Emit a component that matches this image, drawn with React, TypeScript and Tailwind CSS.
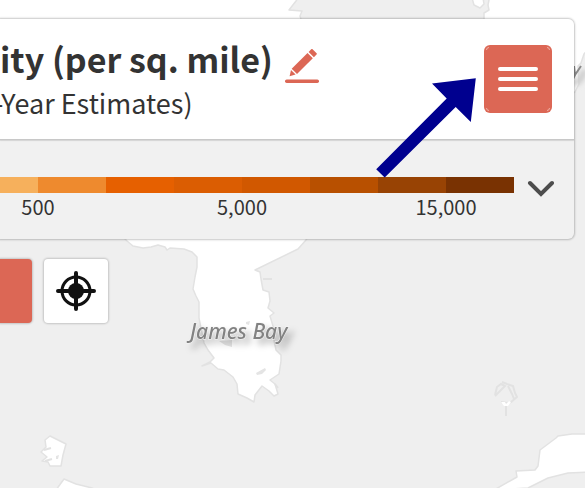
const swatches = [
	'bg-[#f6b05c]',
	'bg-[#ee8a2e]',
	'bg-[#e66000]',
	'bg-[#db5d02]',
	'bg-[#d15800]',
	'bg-[#b85000]',
	'bg-[#984304]',
	'bg-[#793202]',
];

const labels = ['500', '5,000', '15,000'];

const MapBackground = () => (
	<svg
		className="absolute inset-0 w-full h-full"
		viewBox="0 0 585 488"
		preserveAspectRatio="xMinYMin slice"
		aria-hidden="true"
	>
		<defs>
			<filter id="haze" x="-50%" y="-50%" width="200%" height="200%">
				<feGaussianBlur stdDeviation="2.5" />
			</filter>
		</defs>
		<g fill="#fff" stroke="#e2e2e2" strokeWidth="1.5" strokeLinejoin="round">
			{/* Hudson Bay */}
			<path d="M-5 -5H300L296 1L289 10L302 11L300 16L303 25H484V13L489 10L488 5L490 -5H590V47L584 54L581 63L578 66L579 84L575 92L560 100H-5Z" />
			<path d="M472 -2L474 5L480 8L484 4L483 -2Z" />
			{/* James Bay */}
			<path d="M120 234L127 241L133 246L143 248L151 247L158 245L165 247L167 250L170 248L184 249L192 252L197 257L197 267L195 277L193 289L196 296L199 302L199 318L201 328L204 343L208 350L214 358L210 362L202 366L211 363L218 369L224 370L233 377L237 384L238 394L247 398L254 402L255 395L262 386L269 391L274 396L278 394L275 384L270 380L279 374L281 361L281 355L276 350L274 340L273 326L270 316L274 313L268 308L270 301L269 292L263 290L261 279L260 272L255 270L298 249L306 240L310 234Z" />
			{/* Southern coast */}
			<path d="M494 490L517 477L516 471L535 470L538 466L540 450L556 438L558 436L572 434L590 434V472L568 473L548 478L528 488Z" />
			{/* Lakes */}
			<path d="M50 436L66 444L63 455L61 466L50 466L48 462L42 461L47 457L41 452L46 447L45 440Z" />
			<path d="M56 490L64 479L76 484L92 488L100 492Z" />
		</g>
		<g fill="none" stroke="#e2e2e2" strokeWidth="2">
			<path d="M495 395L497 387L501 384L505 386L500 391L495 396M502 382L507 384L513 386L515 393L517 397L511 402L507 403L501 402M508 386L512 394L514 399" />
			<path d="M506 406V416M263 279H272M275 384L278 388M44 450L51 448M45 461L52 459" />
		</g>
		<path d="M501 402H505L506 404L509 401L511 402L508 406H504Z" fill="#fff" />
		<g fill="#e4e4e4">
			<path d="M256 373L265 368L266 370L262 374L257 375Z" />
			<path d="M246 322L250 321L249 325L246 324ZM219 341L232 340V347L225 345Z" />
			<path d="M56 456L59 455L58 459L56 459Z" />
		</g>
		<text
			x="190"
			y="339"
			className="font-['Noto_Sans',sans-serif] text-[21px] font-medium italic drop-shadow-[5px_5px_3px_rgba(0,0,0,0.25)]"
			fill="#828282"
			stroke="#f5f5f5"
			strokeWidth="1"
			paintOrder="stroke"
		>
			James Bay
		</text>
		<path d="M574 84L580 80L585 70" stroke="#ccc" strokeWidth="6" fill="none" filter="url(#haze)" />
		<path d="M574 66L575 75L581 66M576 73L573 79" stroke="#8a8a8a" strokeWidth="2" fill="none" />
	</svg>
);

const PencilIcon = () => (
	<svg className="w-[34px] h-[34px]" viewBox="0 0 34 34" fill="#dc6755">
		<path d="M27.3 0L31.6 4.3Q32.2 5 31.5 5.6L28.9 8.2L23.6 2.9L26.2 .3Q26.8 -.2 27.3 0Z" />
		<path d="M22.5 4L27.8 9.3L12 25L6.7 19.8Z" />
		<path d="M6 21L10.6 25.6L4.6 27.2Z" />
		<rect x="0" y="30.4" width="34" height="3.5" rx="1.7" />
	</svg>
);

const MenuIcon = () => (
	<svg className="w-[68px] h-[68px]" viewBox="0 0 68 68" fill="none">
		<path d="M16 24H52M16 34H52M16 44H52" stroke="#fff" strokeWidth="4" strokeLinecap="round" />
		<path
			d="M2.5 5Q2.5 2.5 5 2.5M63 2.5Q65.5 2.5 65.5 5M65.5 63Q65.5 65.5 63 65.5M5 65.5Q2.5 65.5 2.5 63"
			stroke="#f0b1a6"
		/>
	</svg>
);

const LocateIcon = () => (
	<svg className="w-10 h-10" viewBox="0 0 40 40" fill="none" stroke="#111" strokeLinecap="round">
		<circle cx="20" cy="20" r="14" strokeWidth="3" />
		<circle cx="20" cy="20" r="8" fill="#111" stroke="none" />
		<path d="M20 2V38M2 20H38" strokeWidth="4" />
	</svg>
);

const App = () => {
	return (
		<main className="relative min-h-screen overflow-hidden bg-[#efefef] pt-[19px] font-['Noto_Sans_CJK_SC',sans-serif] text-[#333]">
			<MapBackground />

			<section className="relative mr-[11px] rounded-r-md bg-[#f1f1f1] shadow-[0_0_2px_1px_rgba(0,0,0,0.22)]">
				<header className="flex items-start justify-between rounded-tr-md border-b border-[#c8c8c8] bg-white pt-[26px] pr-[22px] pb-4 shadow-[0_1px_1px_rgba(0,0,0,0.12)]">
					<div className="whitespace-nowrap">
						<div className="flex items-start gap-3">
							<h1 className="text-[34px] leading-7 font-bold">ity (per sq. mile)</h1>
							<button type="button" aria-label="Edit" className="pt-1">
								<PencilIcon />
							</button>
						</div>
						<p className="-ml-1.5 text-[27px] leading-10">-Year Estimates)</p>
					</div>
					<button type="button" aria-label="Menu" className="rounded-md bg-[#dc6755]">
						<MenuIcon />
					</button>
				</header>

				<div className="flex items-start pt-[37px] pb-[18px]">
					<div className="min-w-0 flex-1 overflow-hidden">
						<div className="flex h-4 justify-end">
							{swatches.map((color) => (
								<div key={color} className={`w-[68px] shrink-0 ${color}`} />
							))}
						</div>
						<div className="flex justify-end gap-[68px] text-[20px] leading-7">
							{labels.map((label) => (
								<span key={label} className="w-[136px] shrink-0 text-center">
									{label}
								</span>
							))}
						</div>
					</div>
					<button type="button" aria-label="Expand legend" className="flex w-[60px] justify-center pr-2">
						<svg className="w-7 h-6" viewBox="0 0 28 24" fill="none">
							<path
								d="M4 6L15 17L26 6"
								stroke="#4d4d4d"
								strokeWidth="4"
								strokeLinecap="round"
							/>
						</svg>
					</button>
				</div>

				{/* Callout arrow pointing at the menu button */}
				<svg
					className="pointer-events-none absolute top-[59px] right-[98px] w-[100px] h-[100px]"
					viewBox="0 0 100 100"
					fill="#00008f"
					aria-hidden="true"
				>
					<path d="M99.8 0.2L94.8 44L79.7 29L8.7 99.6L0.2 91.2L70.7 20.5L56 5.5Z" />
				</svg>
			</section>

			<div className="relative mt-5 flex gap-3">
				<button
					type="button"
					aria-label="Layers"
					className="h-16 w-8 rounded-r bg-[#dc6755] shadow-[0_0_2px_1px_rgba(0,0,0,0.18)]"
				/>
				<button
					type="button"
					aria-label="Show my location"
					className="flex h-16 w-16 items-center justify-center rounded bg-white shadow-[0_0_2px_1px_rgba(0,0,0,0.18)]"
				>
					<LocateIcon />
				</button>
			</div>
		</main>
	);
};

export default App;
